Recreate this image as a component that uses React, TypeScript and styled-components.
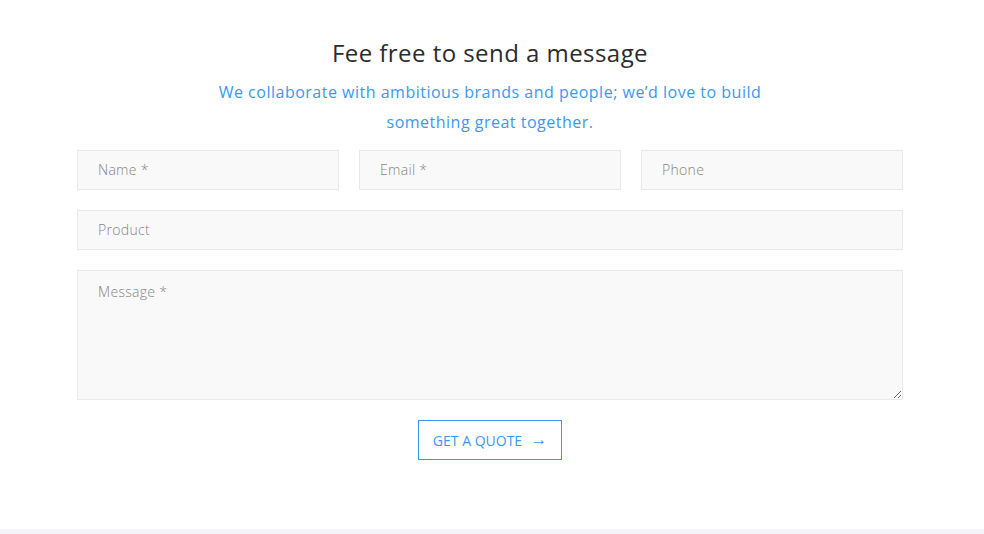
import styled, { createGlobalStyle } from 'styled-components';

const GlobalStyle = createGlobalStyle`
  body {
    margin: 0;
    background: #ffffff;
    font-family: 'Open Sans', 'Liberation Sans', sans-serif;
  }
`;

const App = () => {
  return (
    <>
      <GlobalStyle />
      <Section>
        <Wrapper>
          <Title>Fee free to send a message</Title>
          <Subtitle>
            We collaborate with ambitious brands and people; we’d love to build
            <br />
            something great together.
          </Subtitle>
          <Form onSubmit={(e) => e.preventDefault()}>
            <Row>
              <Input placeholder="Name *" />
              <Input placeholder="Email *" />
              <Input placeholder="Phone" />
            </Row>
            <Input placeholder="Product" />
            <TextArea placeholder="Message *" />
            <Actions>
              <QuoteButton type="submit">
                GET A QUOTE <Arrow>→</Arrow>
              </QuoteButton>
            </Actions>
          </Form>
        </Wrapper>
      </Section>
      <FooterBand />
    </>
  );
};

export default App;

const Section = styled.section`
  height: 529px;
  padding-top: 36px;
  box-sizing: border-box;
`;

const Wrapper = styled.div`
  width: 826px;
  margin-left: 77px;
  display: flex;
  flex-direction: column;
  align-items: center;
`;

const Title = styled.h2`
  margin: 0;
  font-size: 24px;
  font-weight: 500;
  line-height: 34px;
  color: #2b2b2b;
  letter-spacing: 0.45px;
`;

const Subtitle = styled.p`
  margin: 7px 0 0;
  font-size: 16px;
  line-height: 30px;
  color: #3a98f2;
  text-align: center;
  letter-spacing: 0.5px;
`;

const Form = styled.form`
  width: 100%;
  margin-top: 13px;
  display: flex;
  flex-direction: column;
  gap: 20px;
`;

const Row = styled.div`
  display: grid;
  grid-template-columns: repeat(3, 1fr);
  gap: 20px;
`;

const Input = styled.input`
  height: 40px;
  box-sizing: border-box;
  width: 100%;
  padding: 0 20px 2px;
  background: #f9f9f9;
  border: 1px solid #e9e9e9;
  font-family: inherit;
  font-size: 14px;
  letter-spacing: 0.3px;
  color: #555;
  outline: none;
  &::placeholder {
    color: #858585;
    font-weight: 300;
  }
`;

const TextArea = styled.textarea`
  height: 130px;
  box-sizing: border-box;
  width: 100%;
  padding: 11px 20px;
  background: #f9f9f9;
  border: 1px solid #e9e9e9;
  font-family: inherit;
  font-size: 14px;
  letter-spacing: 0.3px;
  color: #555;
  outline: none;
  resize: vertical;
  &::placeholder {
    color: #858585;
    font-weight: 300;
  }
`;

const Actions = styled.div`
  display: flex;
  justify-content: center;
`;

const QuoteButton = styled.button`
  height: 40px;
  width: 144px;
  background: #fff;
  border: 1px solid #3a98f2;
  color: #3a98f2;
  font-family: inherit;
  font-size: 14px;
  display: flex;
  align-items: center;
  justify-content: center;
  gap: 8px;
  cursor: pointer;
  padding: 0;
`;

const Arrow = styled.span`
  font-size: 17px;
  line-height: 1;
  margin-top: -3px;
`;

const FooterBand = styled.div`
  height: 5px;
  background: #f5f5f9;
`;
